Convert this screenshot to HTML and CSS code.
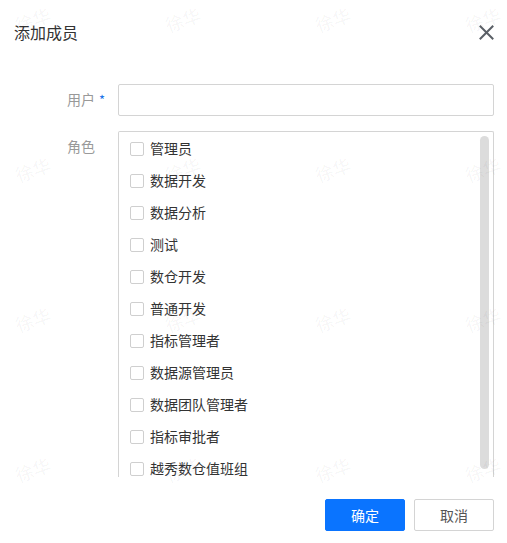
FILE: index.html
```html
<!DOCTYPE html>
<html lang="zh">
<head>
<meta charset="utf-8">
<title>添加成员</title>
<link rel="stylesheet" href="styles.css">
</head>
<body>
<div class="dialog">
  <div class="header">
    <span class="title">添加成员</span>
    <button class="close" aria-label="关闭">
      <svg width="15" height="15" viewBox="0 0 15 15"><path d="M1.5 1.5 L13.5 13.5 M13.5 1.5 L1.5 13.5" stroke="#5a5f66" stroke-width="2" stroke-linecap="square" fill="none"/></svg>
    </button>
  </div>
  <div class="form">
    <div class="row">
      <label class="label">用户<span class="req">*</span></label>
      <input class="input" type="text">
    </div>
    <div class="row">
      <label class="label">角色</label>
      <div class="listbox">
        <ul class="list">
          <li><span class="cb"></span>管理员</li>
          <li><span class="cb"></span>数据开发</li>
          <li><span class="cb"></span>数据分析</li>
          <li><span class="cb"></span>测试</li>
          <li><span class="cb"></span>数仓开发</li>
          <li><span class="cb"></span>普通开发</li>
          <li><span class="cb"></span>指标管理者</li>
          <li><span class="cb"></span>数据源管理员</li>
          <li><span class="cb"></span>数据团队管理者</li>
          <li><span class="cb"></span>指标审批者</li>
          <li><span class="cb"></span>越秀数仓值班组</li>
        </ul>
        <div class="scrollbar"></div>
      </div>
    </div>
  </div>
  <div class="footer">
    <button class="btn primary">确定</button>
    <button class="btn">取消</button>
  </div>
  <div class="watermarks">
    <span>徐华</span><span>徐华</span><span>徐华</span><span>徐华</span>
    <span>徐华</span><span>徐华</span><span>徐华</span><span>徐华</span>
    <span>徐华</span><span>徐华</span><span>徐华</span><span>徐华</span>
    <span>徐华</span><span>徐华</span><span>徐华</span><span>徐华</span>
  </div>
</div>
</body>
</html>
```

FILE: styles.css
```css
* { box-sizing: border-box; }
html, body {
  margin: 0;
  padding: 0;
  background: #fff;
}
body {
  font-family: "Noto Sans CJK SC", "Noto Sans", sans-serif;
  color: #333;
}
.dialog {
  position: relative;
  width: 507px;
  height: 543px;
  overflow: hidden;
}
.header {
  height: 64px;
  display: flex;
  align-items: center;
  justify-content: space-between;
  padding: 0 13px 0 14px;
}
.title {
  font-size: 16px;
  color: #333;
  line-height: 20px;
}
.close {
  border: 0;
  background: none;
  padding: 0;
  width: 15px;
  height: 15px;
  display: flex;
  cursor: pointer;
}
.form {
  padding: 20px 13px 0 0;
  display: flex;
  flex-direction: column;
  gap: 15px;
}
.row {
  display: grid;
  grid-template-columns: 118px 1fr;
  align-items: start;
}
.label {
  font-size: 14px;
  color: #999;
  padding-left: 67px;
  line-height: 30px;
  white-space: nowrap;
}
.req {
  color: #1a73e8;
  margin-left: 4px;
  font-size: 13px;
}
.input {
  height: 32px;
  border: 1px solid #d4d4d4;
  border-radius: 2px;
  width: 100%;
  outline: none;
  margin: 0;
}
.listbox {
  position: relative;
  height: 346px;
  border: 1px solid #d4d4d4;
  border-bottom: 0;
  border-radius: 2px 2px 0 0;
  overflow: hidden;
}
.list {
  list-style: none;
  margin: 0;
  padding: 0 0 0 11px;
}
.list li {
  height: 32px;
  display: flex;
  align-items: center;
  font-size: 14px;
  color: #333;
  gap: 6px;
}
.cb {
  width: 14px;
  height: 14px;
  border: 1px solid #cfcfcf;
  border-radius: 2px;
  background: #fff;
  flex: none;
  margin-top: 1px;
}
.scrollbar {
  position: absolute;
  top: 4px;
  right: 4px;
  width: 9px;
  height: 333px;
  border-radius: 5px;
  background: #dcdcdc;
}
.footer {
  display: flex;
  justify-content: flex-end;
  gap: 9px;
  padding: 22px 13px 0 0;
}
.btn {
  width: 80px;
  height: 32px;
  border: 1px solid #d4d4d4;
  border-radius: 2px;
  background: #fff;
  color: #555;
  font-family: inherit;
  font-size: 14px;
  padding: 0;
}
.btn.primary {
  background: #0a74ff;
  border-color: #0a74ff;
  color: #fff;
}
.watermarks {
  position: absolute;
  left: 12px;
  top: 3px;
  display: grid;
  grid-template-columns: repeat(4, 150px);
  grid-auto-rows: 150px;
  pointer-events: none;
}
.watermarks span {
  font-size: 18px;
  line-height: 22px;
  color: rgba(0, 0, 0, 0.05);
  transform: rotate(-20deg);
  transform-origin: left top;
  width: 40px;
  height: 22px;
  margin-top: 12px;
  white-space: nowrap;
}
```
